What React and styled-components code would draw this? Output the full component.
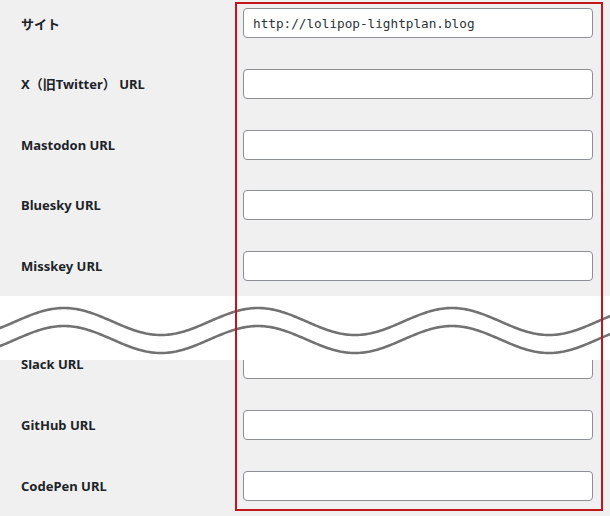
import styled, { createGlobalStyle } from "styled-components";
import React from "react";

const fields = [
  { label: "サイト", value: "http://lolipop-lightplan.blog" },
  { label: "X（旧Twitter） URL" },
  { label: "Mastodon URL" },
  { label: "Bluesky URL" },
  { label: "Misskey URL" },
  { cut: true },
  { label: "Slack URL" },
  { label: "GitHub URL" },
  { label: "CodePen URL" },
];

// 波線（省略の印）
const wavePath = (center) => {
  const pts = [];
  for (let x = -10; x <= 620; x += 2) {
    const y = center - 13.5 * Math.cos((2 * Math.PI * (x - 64)) / 194);
    pts.push(`${x},${y.toFixed(2)}`);
  }
  return "M" + pts.join(" L");
};

export default function App() {
  return (
    <>
      <GlobalStyle />
      <Sheet>
        <Rows>
          {fields.map((f, i) =>
            f.cut ? (
              <Band key={i}>
                <svg width="610" height="64" viewBox="0 0 610 64">
                  <path d={wavePath(25.5)} fill="none" stroke="#727272" strokeWidth="2.6" />
                  <path d={wavePath(43.5)} fill="none" stroke="#727272" strokeWidth="2.6" />
                </svg>
              </Band>
            ) : (
              <FieldRow key={i}>
                <Label>{f.label}</Label>
                <Input type="text" defaultValue={f.value || ""} />
              </FieldRow>
            )
          )}
        </Rows>
        <Frame />
      </Sheet>
    </>
  );
}

const GlobalStyle = createGlobalStyle`
  body {
    margin: 0;
    background: #f0f0f1;
    font-family: "Noto Sans", "Noto Sans CJK JP", sans-serif;
  }
`;

const Sheet = styled.div`
  display: grid;
  grid-template-columns: 235px 368px 7px;
  width: 610px;
  padding-top: 2px;
`;

const Rows = styled.div`
  grid-column: 1 / -1;
  grid-row: 1;
  display: flex;
  flex-direction: column;
  gap: 30.75px;
  padding: 6px 0 10px;
`;

// 赤枠
const Frame = styled.div`
  grid-column: 2;
  grid-row: 1;
  border: 2px solid #c3161c;
  position: relative;
  z-index: 2;
  pointer-events: none;
`;

const FieldRow = styled.div`
  display: grid;
  grid-template-columns: 235px 368px;
  align-items: center;
  height: 30px;
`;

const Label = styled.div`
  padding-left: 21px;
  font-size: 13px;
  font-weight: 700;
  color: #1d2327;
  white-space: nowrap;
`;

const Input = styled.input`
  box-sizing: border-box;
  margin: 0 0 0 8px;
  width: 350px;
  height: 30px;
  padding: 0 9px;
  border: 1px solid #8c8f94;
  border-radius: 4px;
  background: #fff;
  color: #2c3338;
  font-family: "DejaVu Sans Mono", "Liberation Mono", monospace;
  font-size: 12.7px;
  outline: none;
`;

const Band = styled.div`
  position: relative;
  z-index: 1;
  height: 64px;
  margin: -15.75px 0 -41.75px;
  background: #fff;
  overflow: hidden;

  svg {
    display: block;
  }
`;
